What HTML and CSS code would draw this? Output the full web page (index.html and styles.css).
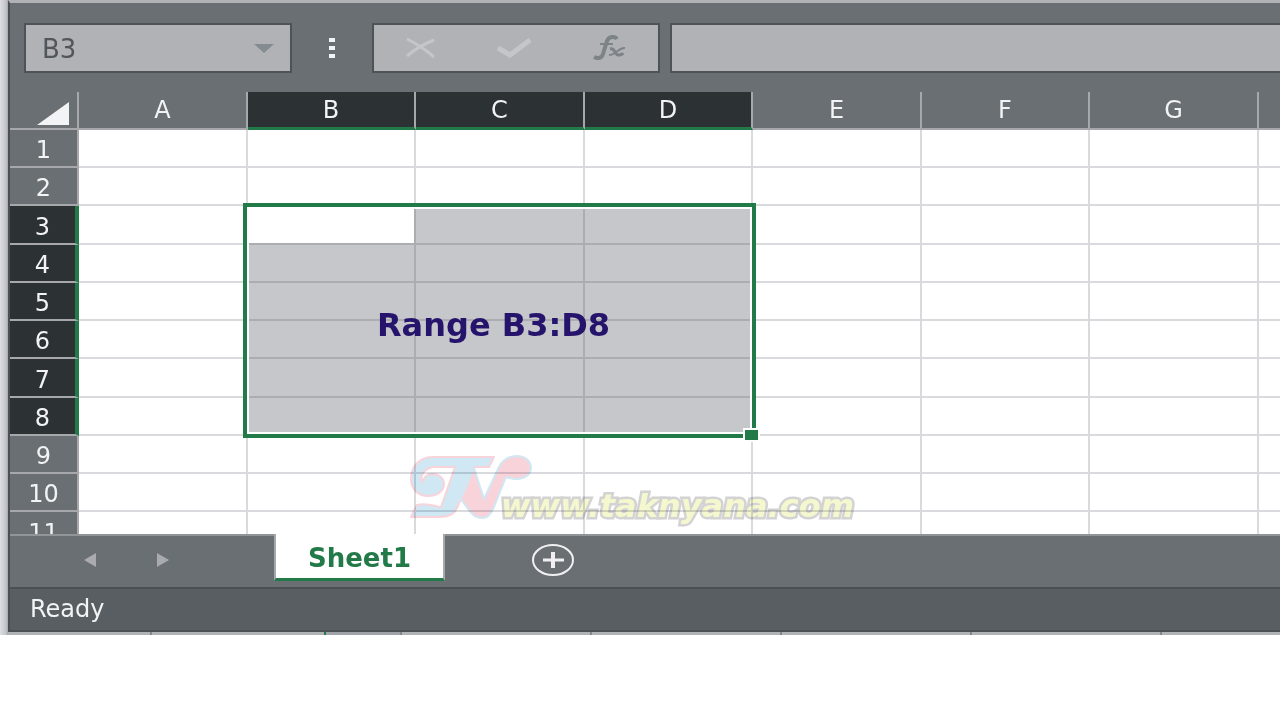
FILE: index.html
```
<!DOCTYPE html>
<html lang="en">
<head>
  <meta charset="UTF-8">
  <meta name="viewport" content="width=device-width, initial-scale=1.0">
  <title>Range B3:D8</title>

  <link rel="stylesheet" href="styles.css">
</head>

<body>
  <div class="desktop">
    <main class="window">
      <div class="formula-bar">
        <div class="name-box">
          <input type="text" class="name-input" value="B3" aria-label="Name box">
          <button type="button" class="icon-btn" aria-label="Show names">
            <svg width="20" height="9" viewBox="0 0 20 9"><path d="M0 0h20L10 9z" fill="#858c91"/></svg>
          </button>
        </div>
        <div class="dots"><span></span><span></span><span></span></div>
        <div class="actions">
          <button type="button" class="icon-btn" aria-label="Cancel">
            <svg width="30" height="20" viewBox="0 0 30 20" fill="none" stroke="#c5c6ca" stroke-width="3"><path d="M1 1C11 6 20 12 28 19M28 2C18 6 8 12 1 18"/></svg>
          </button>
          <button type="button" class="icon-btn" aria-label="Enter">
            <svg width="36" height="20" viewBox="0 0 36 20" fill="none" stroke="#c5c6ca" stroke-width="5"><path d="M2 10l12 7L34 2"/></svg>
          </button>
          <button type="button" class="icon-btn" aria-label="Insert function">
            <svg width="34" height="26" viewBox="0 0 34 26" fill="none" stroke="#7d8488">
              <path d="M25 4c-2-3-8-3-10 2l-4 13c-1 4-5 5-9 3" stroke-width="4"/>
              <path d="M8 9h13" stroke-width="2"/>
              <path d="M18 14c5-2 5 6 8 6 2 0 4 0 5-2" stroke-width="3"/>
              <path d="M33 13c-6-1-9 7-16 7" stroke-width="2"/>
            </svg>
          </button>
        </div>
        <input type="text" class="formula-input" aria-label="Formula">
      </div>

      <div class="sheet">
        <table class="grid">
          <colgroup>
            <col class="col-head">
            <col class="col"><col class="col"><col class="col"><col class="col"><col class="col"><col class="col"><col class="col">
            <col>
          </colgroup>
          <thead>
            <tr>
              <th class="corner"><svg width="32" height="23" viewBox="0 0 32 23"><path d="M32 0v23H0z" fill="#f2f3f5"/></svg></th>
              <th>A</th>
              <th class="active">B</th>
              <th class="active">C</th>
              <th class="active">D</th>
              <th>E</th>
              <th>F</th>
              <th>G</th>
              <th></th>
            </tr>
          </thead>
          <tbody>
            <tr><th>1</th><td></td><td></td><td></td><td></td><td></td><td></td><td></td><td></td></tr>
            <tr><th>2</th><td></td><td></td><td></td><td></td><td></td><td></td><td></td><td></td></tr>
            <tr><th class="active">3</th><td></td><td class="first"></td><td class="sel"></td><td class="sel"></td><td></td><td></td><td></td><td></td></tr>
            <tr><th class="active">4</th><td></td><td class="sel"></td><td class="sel"></td><td class="sel"></td><td></td><td></td><td></td><td></td></tr>
            <tr><th class="active">5</th><td></td><td class="sel"></td><td class="sel"></td><td class="sel"></td><td></td><td></td><td></td><td></td></tr>
            <tr><th class="active">6</th><td></td><td class="sel"></td><td class="sel"></td><td class="sel"></td><td></td><td></td><td></td><td></td></tr>
            <tr><th class="active">7</th><td></td><td class="sel"></td><td class="sel"></td><td class="sel"></td><td></td><td></td><td></td><td></td></tr>
            <tr><th class="active">8</th><td></td><td class="sel"></td><td class="sel"></td><td class="sel"></td><td></td><td></td><td></td><td></td></tr>
            <tr><th>9</th><td></td><td></td><td></td><td></td><td></td><td></td><td></td><td></td></tr>
            <tr><th>10</th><td></td><td></td><td></td><td></td><td></td><td></td><td></td><td></td></tr>
            <tr><th>11</th><td></td><td></td><td></td><td></td><td></td><td></td><td></td><td></td></tr>
          </tbody>
        </table>

        <div class="selection">
          <span class="range-label">Range B3:D8</span>
          <span class="handle"></span>
        </div>

        <div class="watermark">
          <svg class="logo" width="124" height="68" viewBox="0 0 124 68" stroke-linejoin="round">
            <path d="M85 3H24C10 3 2 13 2 25c0 10 7 17 17 17 9 0 16-5 16-12 0-6-5-10-12-10-5 0-8 3-10 8-3-7 4-15 13-15h20L32 53c-6 0-13-5-24-2L2 63h28c9 0 15-2 18-9l17-41h15z" fill="#d0e8f4" stroke="#f8d3da" stroke-width="2"/>
            <path d="M65 14L51 46c5 0 9 18 22 18 6 0 9-4 12-11l12-30c3 1 6 2 11 2 8 0 14-5 14-11 0-7-6-12-14-12-9 0-16 5-19 13L75 45z" fill="#f8d3da" stroke="#d0e8f4" stroke-width="2"/>
          </svg>
          <span class="site">www.taknyana.com</span>
        </div>
      </div>

      <div class="tab-bar">
        <div class="tab-nav">
          <button type="button" class="icon-btn" aria-label="Previous sheet">
            <svg width="12" height="14" viewBox="0 0 12 14"><path d="M12 0v14L0 7z" fill="#a9abae"/></svg>
          </button>
          <button type="button" class="icon-btn" aria-label="Next sheet">
            <svg width="12" height="14" viewBox="0 0 12 14"><path d="M0 0v14l12-7z" fill="#a9abae"/></svg>
          </button>
        </div>
        <button type="button" class="tab">Sheet1</button>
        <button type="button" class="icon-btn add-sheet" aria-label="New sheet">
          <svg width="44" height="32" viewBox="0 0 44 32" fill="none" stroke="#f0f0f2">
            <ellipse cx="22" cy="16" rx="20" ry="15" stroke-width="2"/>
            <path d="M12 16h21" stroke-width="3"/>
            <path d="M22 8v16" stroke-width="4"/>
          </svg>
        </button>
      </div>

      <div class="status-bar">Ready</div>
    </main>
    <div class="behind">
      <span class="short"></span><span class="green"></span><span class="tint"></span><span></span><span></span><span></span><span></span>
    </div>
  </div>
</body>
</html>
```
FILE: styles.css
```
* {
  box-sizing: border-box;
}

body {
  margin: 0;
  background: #fff;
  font-family: "DejaVu Sans", Verdana, sans-serif;
  font-size: 24px;
  overflow-x: hidden;
}

.desktop {
  padding-left: 8px;
  background: linear-gradient(to right, #dddee2, #c4c5ca 6px, #a5a6aa 8px);
}

.window {
  border-left: 2px solid #4b5054;
  border-top: 3px solid #b1b2b6;
  background: #6a6f73;
}

.icon-btn {
  display: flex;
  padding: 0;
  border: none;
  background: none;
  cursor: pointer;
}

/* formula bar */
.formula-bar {
  display: flex;
  height: 89px;
  padding: 20px 0 19px 14px;
}

.name-box,
.actions,
.formula-input {
  border: 2px solid #4e5357;
  background: #b1b2b6;
}

.name-box {
  display: flex;
  align-items: center;
  width: 268px;
  padding: 0 16px;
}

.name-input {
  flex: 1;
  min-width: 0;
  padding: 2px 0 0;
  border: none;
  background: none;
  color: #50565c;
  font: inherit;
  font-size: 26px;
}

.dots {
  display: flex;
  flex-direction: column;
  align-items: center;
  justify-content: center;
  gap: 4px;
  width: 80px;
}

.dots span {
  width: 6px;
  height: 4px;
  background: #f2f3f5;
}

.actions {
  display: flex;
  align-items: center;
  justify-content: space-between;
  width: 288px;
  padding: 0 32px;
}

.formula-input {
  flex: 1;
  min-width: 0;
  margin-left: 10px;
  border-right: none;
  font: inherit;
}

/* cells */
.sheet {
  position: relative;
  height: 442px;
  overflow: hidden;
  background: #fff;
}

.grid {
  width: 100%;
  table-layout: fixed;
  border-collapse: separate;
  border-spacing: 0;
}

.col-head {
  width: 69px;
}

.col {
  width: 168px;
}

.col:nth-child(even) {
  width: 169px;
}

.grid tr {
  height: 38px;
}

.grid tbody tr:nth-child(4n+3) {
  height: 39px;
}

.grid th,
.grid td {
  padding: 0;
  border-right: 2px solid #d9dade;
  border-bottom: 2px solid #d9dade;
  line-height: 32px;
}

.grid th {
  border-color: #a6a8ab;
  background: #6a6f73;
  color: #f2f3f5;
  font-weight: normal;
}

.grid tbody th {
  padding-top: 4px;
}

.grid th:last-child,
.grid td:last-child {
  border-right: none;
}

.grid th.active {
  background: #2c3133;
}

.grid thead th.active {
  border-bottom: 3px solid #217a48;
}

.grid tbody th.active {
  border-right: 4px solid #217a48;
}

.grid .corner svg {
  display: block;
  margin: 6px 8px 0 auto;
}

.grid td.sel {
  border-color: #acadb1;
  background: #c6c7cb;
}

.grid td.first {
  border-color: #acadb1;
}

.selection {
  position: absolute;
  top: 111px;
  left: 233px;
  display: flex;
  align-items: center;
  justify-content: center;
  width: 513px;
  height: 235px;
  padding: 8px 12px 0 0;
  border: 4px solid #217a48;
  box-shadow: inset 0 0 0 2px #fff;
}

.range-label {
  color: #26146c;
  font-size: 32px;
  font-weight: bold;
}

.handle {
  position: absolute;
  right: -8px;
  bottom: -8px;
  width: 17px;
  height: 14px;
  border: 2px solid #fff;
  background: #217a48;
}

.watermark {
  position: absolute;
  top: 362px;
  left: 399px;
  display: flex;
  align-items: flex-end;
  mix-blend-mode: multiply;
}

.site {
  margin-left: -32px;
  color: #f5f8cf;
  font-size: 32px;
  font-style: italic;
  font-weight: bold;
  line-height: 32px;
  -webkit-text-stroke: 5px #d3d3d3;
  paint-order: stroke fill;
}

/* sheet tabs */
.tab-bar {
  display: flex;
  height: 53px;
  border-top: 2px solid #929598;
}

.tab-nav {
  display: flex;
  gap: 61px;
  width: 264px;
  padding: 0 0 4px 74px;
}

.tab {
  width: 171px;
  height: 47px;
  margin-top: -2px;
  padding: 4px 0 0;
  border: 2px solid #a6a8ab;
  border-top: none;
  border-bottom: 3px solid #217a48;
  background: #fff;
  color: #217a48;
  font-family: inherit;
  font-size: 26px;
  font-weight: bold;
  cursor: pointer;
}

.tab-nav .icon-btn,
.add-sheet {
  align-items: center;
}

.add-sheet {
  margin-left: 86px;
  padding-bottom: 4px;
}

.status-bar {
  height: 45px;
  padding-left: 20px;
  border-top: 2px solid #4b5054;
  border-bottom: 2px solid #4b5054;
  background: #595e62;
  color: #f2f3f5;
  line-height: 40px;
}

/* edge of the window underneath */
.behind {
  display: flex;
  height: 3px;
  background: #b1b2b6;
}

.behind span {
  flex: none;
  width: 190px;
  border-right: 2px solid #85888b;
}

.behind .short {
  width: 144px;
}

.behind .green {
  width: 174px;
  border-color: #217a48;
}

.behind .tint {
  width: 76px;
  background: #a0a4a8;
}
```
